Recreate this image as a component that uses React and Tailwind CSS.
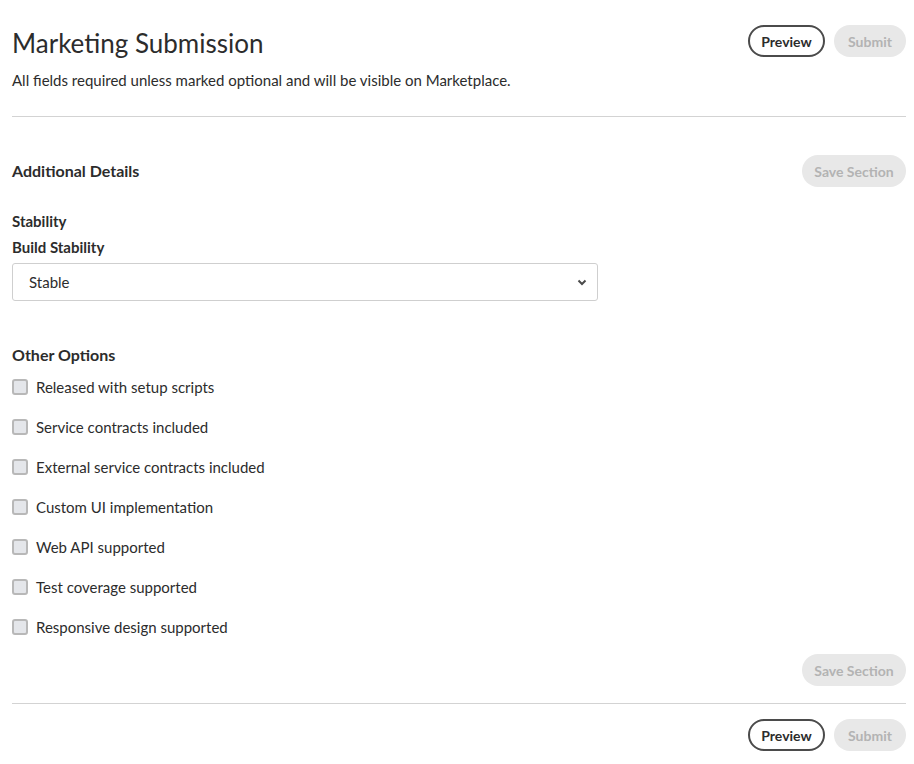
import React from "react";

const font = { fontFamily: "Lato, 'Open Sans', sans-serif" };

function Buttons() {
  return (
    <div className="flex items-center gap-[9px]">
      <button className="h-[32px] w-[77px] rounded-full border-2 border-[#4b4b4b] bg-white text-[14px] font-bold text-[#2c2c2c]">
        Preview
      </button>
      <button className="h-[32px] w-[72px] rounded-full bg-[#e8e8e8] text-[14px] font-bold text-[#b3b3b3]">
        Submit
      </button>
    </div>
  );
}

function SaveSection() {
  return (
    <button className="h-[32px] w-[104px] rounded-full bg-[#e8e8e8] text-[14px] font-bold text-[#b3b3b3]">
      Save Section
    </button>
  );
}

const options = [
  "Released with setup scripts",
  "Service contracts included",
  "External service contracts included",
  "Custom UI implementation",
  "Web API supported",
  "Test coverage supported",
  "Responsive design supported",
];

export default function App() {
  return (
    <div style={font} className="w-[914px] min-h-[764px] bg-white pl-[12px] pr-[8px] text-[#2c2c2c]">
      <div className="flex items-start justify-between pt-[25px]">
        <div>
          <h1 className="text-[26px] leading-[36px] font-normal text-[#2c2c2c]">Marketing Submission</h1>
          <p className="mt-[9px] text-[15px] leading-[20px] text-[#2c2c2c]">
            All fields required unless marked optional and will be visible on Marketplace.
          </p>
        </div>
        <Buttons />
      </div>
      <div className="mt-[26px] h-px bg-[#d3d3d3]" />

      <div className="mt-[38px] flex items-center justify-between">
        <h2 className="text-[16px] font-bold leading-[24px]">Additional Details</h2>
        <SaveSection />
      </div>

      <div className="mt-[24px] text-[15px] font-bold leading-[20px]">Stability</div>
      <div className="mt-[6px] text-[15px] font-bold leading-[20px]">Build Stability</div>
      <div className="relative mt-[6px] w-[586px]">
        <div className="flex h-[38px] items-center justify-between rounded-[3px] border border-[#cfcfcf] bg-white pl-[16px] pr-[10px]">
          <span className="text-[15px]">Stable</span>
          <svg width="10" height="7" viewBox="0 0 10 7">
            <path d="M1.5 1.5 L5 5 L8.5 1.5" fill="none" stroke="#4b4b4b" strokeWidth="2" />
          </svg>
        </div>
      </div>

      <h2 className="mt-[42px] text-[16px] font-bold leading-[24px]">Other Options</h2>
      <div className="mt-[10px] flex flex-col gap-[20px]">
        {options.map((o) => (
          <label key={o} className="flex h-[20px] items-center gap-[8px]">
            <span className="h-[16px] w-[16px] rounded-[3px] border-2 border-[#b8b8b8] bg-[#e4e6ea]" />
            <span className="text-[15px] leading-[20px]">{o}</span>
          </label>
        ))}
      </div>

      <div className="mt-[17px] flex justify-end">
        <SaveSection />
      </div>
      <div className="mt-[17px] h-px bg-[#d3d3d3]" />
      <div className="mt-[15px] flex justify-end pb-[14px]">
        <Buttons />
      </div>
    </div>
  );
}
